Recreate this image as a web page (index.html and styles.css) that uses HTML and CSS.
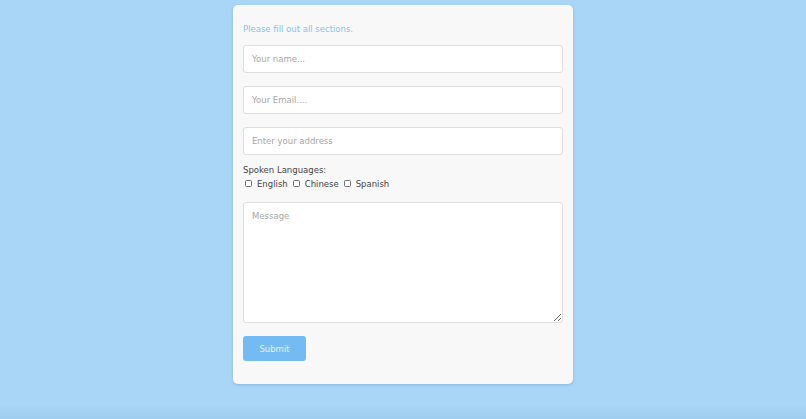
FILE: index.html
```html
<!DOCTYPE html>
<html lang="en">
<head>
<meta charset="utf-8">
<title>Contact form</title>
<link rel="stylesheet" href="styles.css">
</head>
<body>
<main class="page">
  <form class="card">
    <p class="intro">Please fill out all sections.</p>
    <input class="field" type="text" placeholder="Your name...">
    <input class="field" type="email" placeholder="Your Email....">
    <input class="field field-last" type="text" placeholder="Enter your address">
    <div class="langs">
      <div class="langs-title">Spoken Languages:</div>
      <div class="langs-row">
        <label class="lang"><input class="box" type="checkbox"> English</label>
        <label class="lang"><input class="box" type="checkbox"> Chinese</label>
        <label class="lang"><input class="box" type="checkbox"> Spanish</label>
      </div>
    </div>
    <textarea class="message" placeholder="Message"></textarea>
    <button class="submit" type="button">Submit</button>
  </form>
</main>
</body>
</html>
```
FILE: styles.css
```css
html, body {
  margin: 0;
  height: 100%;
}
body {
  background: linear-gradient(to bottom, #a9d6f6 0, #a9d6f6 405px, #9fcdef 419px);
  font-family: "DejaVu Sans", sans-serif;
  color: #444;
}
.page {
  display: flex;
  justify-content: center;
  padding-top: 5px;
}
.card {
  width: 320px;
  padding: 10px 10px 22px;
  background: #f8f8f8;
  border-radius: 5px;
  box-shadow: 0 1px 3px rgba(80, 130, 170, 0.35);
  display: flex;
  flex-direction: column;
}
.intro {
  margin: 6px 0 8px;
  font-size: 8.5px;
  line-height: 16px;
  color: #86c2ee;
}
.field {
  box-sizing: border-box;
  height: 28px;
  margin: 0 0 13px;
  padding: 0 8px;
  border: 1px solid #dedede;
  border-radius: 3px;
  background: #fff;
  font-family: inherit;
  font-size: 8.5px;
  color: #444;
  outline: none;
}
.field-last {
  margin-bottom: 8px;
}
.field::placeholder, .message::placeholder {
  color: #a6a6a6;
}
.langs {
  font-size: 8.5px;
}
.langs-title {
  line-height: 14px;
}
.langs-row {
  display: flex;
  align-items: center;
  height: 13px;
  padding-left: 2px;
}
.lang {
  display: flex;
  align-items: center;
  margin-right: 5px;
}
.box {
  appearance: none;
  -webkit-appearance: none;
  box-sizing: border-box;
  width: 7px;
  height: 7px;
  margin: 0 5px 0 0;
  border: 1px solid #6f6f6f;
  border-radius: 1.5px;
  background: #fff;
}
.message {
  box-sizing: border-box;
  height: 121px;
  margin: 12px 0 13px;
  padding: 8px;
  border: 1px solid #dedede;
  border-radius: 3px;
  background: #fff;
  font-family: inherit;
  font-size: 8.5px;
  outline: none;
}
.submit {
  align-self: flex-start;
  width: 63px;
  height: 25px;
  margin-bottom: 1px;
  border: none;
  border-radius: 3px;
  background: #74bbf3;
  color: #e3f1fd;
  font-family: inherit;
  font-size: 8.5px;
}
```
